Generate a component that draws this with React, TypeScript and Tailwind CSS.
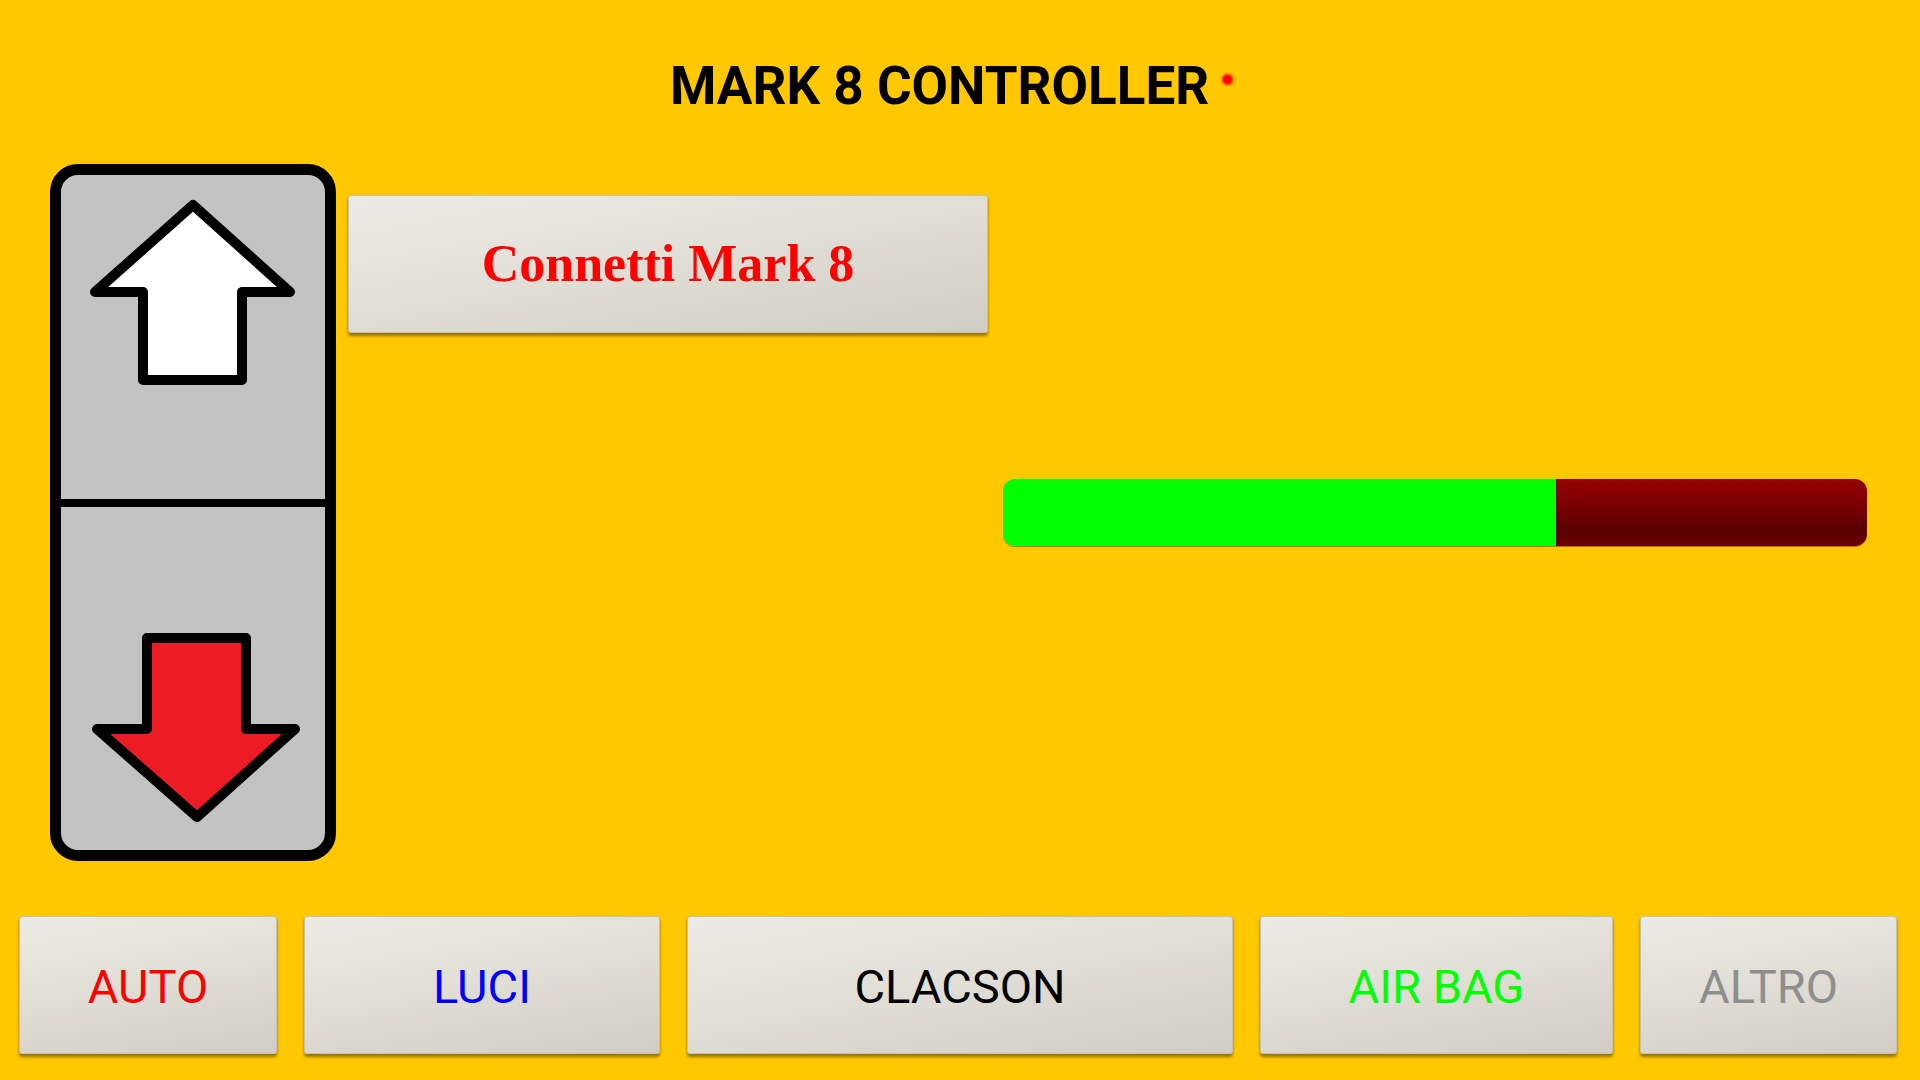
import React from "react";

const btn =
  "flex items-center justify-center h-[138px] rounded-[3px] border border-[#c4c0b6] bg-[linear-gradient(170deg,#edebe5_0%,#e2dfd7_45%,#d1cdc4_100%)] shadow-[0_3px_3px_rgba(70,50,0,0.55)]";

function UpArrow() {
  return (
    <svg width="264" height="324" viewBox="0 0 264 324" className="block">
      <polygon
        points="132,30 229,117 181,117 181,205 82,205 82,117 34,117"
        fill="#ffffff"
        stroke="#000000"
        strokeWidth="10"
        strokeLinejoin="round"
      />
    </svg>
  );
}

function DownArrow() {
  return (
    <svg width="264" height="343" viewBox="0 0 264 343" className="block">
      <polygon
        points="86,131 185,131 185,222 234,222 136,310 36,222 86,222"
        fill="#ed1c24"
        stroke="#000000"
        strokeWidth="10"
        strokeLinejoin="round"
      />
    </svg>
  );
}

export default function App() {
  const bottom = [
    { label: "AUTO", w: "w-[258px]", c: "text-[#ff0000]" },
    { label: "LUCI", w: "w-[356px]", c: "text-[#0000ff]" },
    { label: "CLACSON", w: "w-[546px]", c: "text-[#000000]" },
    { label: "AIR BAG", w: "w-[353px]", c: "text-[#00ff00]" },
    { label: "ALTRO", w: "w-[257px]", c: "text-[#8e8e8e]" },
  ];
  return (
    <div className="w-[1920px] h-[1080px] bg-[#ffc800] overflow-hidden flex flex-col font-['Roboto',sans-serif]">
      {/* Title */}
      <div className="mt-[55px] h-[63px] flex items-center pl-[670px]">
        <span className="text-[53px] leading-[63px] font-bold text-black">MARK 8 CONTROLLER</span>
        <span className="ml-[13px] mb-[14px] w-[11px] h-[11px] rounded-full bg-[#ff0000] blur-[1px]" />
      </div>

      {/* Main section */}
      <div className="mt-[46px] flex items-start">
        <div className="ml-[50px] w-[286px] h-[697px] border-[11px] border-black rounded-[28px] bg-[#c3c3c3] flex flex-col overflow-hidden">
          <div className="h-[324px]">
            <UpArrow />
          </div>
          <div className="h-[8px] bg-black" />
          <div className="flex-1">
            <DownArrow />
          </div>
        </div>

        <div className={`${btn} ml-[12px] mt-[31px] w-[640px]`}>
          <span className="font-['Liberation_Serif',serif] font-bold text-[52px] text-[#ff0000]">Connetti Mark 8</span>
        </div>

        <div className="ml-[15px] mt-[315px] w-[864px] h-[67px] rounded-[12px] overflow-hidden flex shadow-[0_1px_0_rgba(170,70,0,0.7)]">
          <div className="w-[553px] h-full bg-[#00ff00]" />
          <div className="flex-1 h-full bg-[linear-gradient(to_bottom,#960000_0%,#7a0000_40%,#5a0000_75%,#6a0000_100%)]" />
        </div>
      </div>

      {/* Bottom buttons */}
      <div className="mt-[55px] pl-[19px] flex gap-[27px]">
        {bottom.map((b) => (
          <div key={b.label} className={`${btn} ${b.w}`}>
            <span className={`pt-[4px] text-[47px] font-normal ${b.c}`}>{b.label}</span>
          </div>
        ))}
      </div>
    </div>
  );
}
